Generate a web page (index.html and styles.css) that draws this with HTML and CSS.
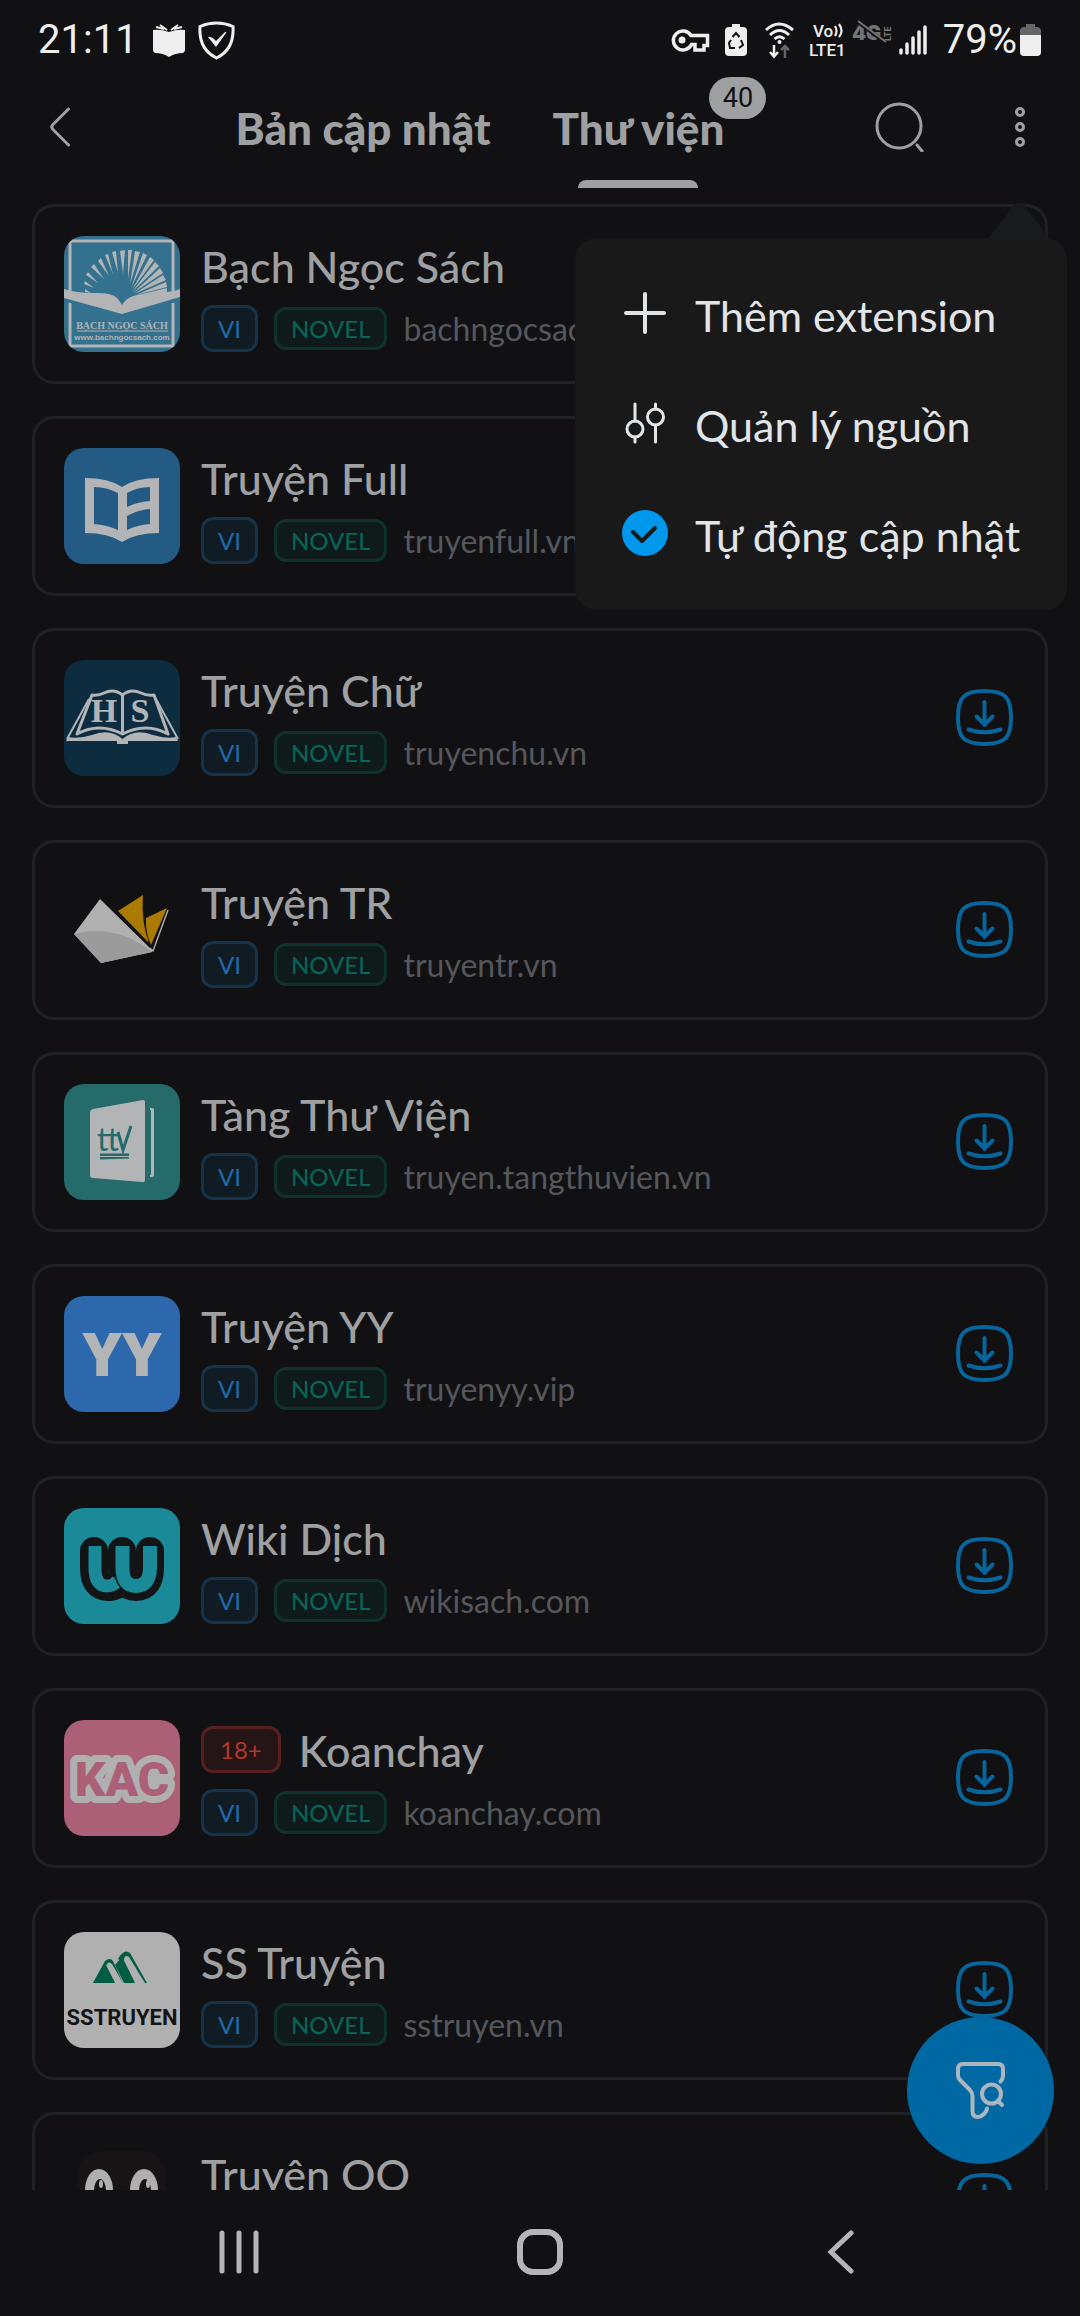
FILE: index.html
```html
<!DOCTYPE html>
<html lang="vi">
<head>
<meta charset="utf-8">
<meta name="viewport" content="width=device-width, initial-scale=1">
<title>Thư viện</title>
<link rel="stylesheet" href="styles.css">
</head>
<body>
<svg class="defs" aria-hidden="true">
  <symbol id="download" viewBox="0 0 63 63">
    <path d="M31.500 4C52 4 58 10 58 30.500S52 57 31.500 57 5 51 5 30.500 11 4 31.500 4Z M31.500 15V38 M23.500 29.500L31.500 37.500L39.500 29.500 M15.500 42.500Q31.500 48 47.500 42.500" fill="none" stroke="currentColor" stroke-width="4" stroke-linecap="round" stroke-linejoin="round"/>
  </symbol>
</svg>

<div class="screen">
  <div class="status">
    <div class="status-side">
      <span class="clock">21:11</span>
      <svg class="book-status" width="34" height="36" viewBox="0 0 34 36"><path d="M1 8Q9 7 17 10Q25 7 33 8V28Q33 30 31 31Q23 31 17 35Q11 31 3 31Q1 30 1 28Z" fill="#eee"/><path d="M15 8L8 3M12 7L4 5M19 8L26 3M22 7L30 5" stroke="#eee" stroke-width="2"/></svg>
      <svg width="37" height="39" viewBox="0 0 37 39"><path d="M18.500 2Q27 2 35 5.500C36 21 31 31 18.500 37C6 31 1 21 2 5.500Q10 2 18.500 2Z" fill="none" stroke="#eee" stroke-width="3"/><path d="M10 16Q13 15 18 20L27 11Q29 10 28 12L18 26Z" fill="#eee"/></svg>
    </div>
    <div class="status-side">
      <svg class="key" width="40" height="36" viewBox="0 0 40 36"><path d="M21 13.500H37.500V23.500H34V28H25V22.500H21.500A9.500 9.500 0 1 1 21 13.500Z" fill="none" stroke="#eee" stroke-width="3.500"/><circle cx="12" cy="18" r="3.500" fill="#eee"/></svg>
      <svg class="saver" width="22" height="34" viewBox="0 0 22 34"><path d="M7 1H15V4H18Q22 4 22 8V29Q22 33 18 33H4Q0 33 0 29V8Q0 4 4 4H7Z" fill="#eee"/><path d="M7.500 14L11 10L14.500 14M16 17L18 22L14 25M10 25H5L4 20L6 17" fill="none" stroke="#111113" stroke-width="2"/></svg>
      <svg class="wifi" width="29" height="38" viewBox="0 0 29 38"><g fill="none" stroke="#eee" stroke-width="3"><path d="M1 9Q14 -3 28 9M5 14Q14.500 5 24 14M9.500 18Q14.500 13.500 19.500 18"/><path d="M9 24V35M5 31L9 35.500L13 31" stroke-width="2.500"/><path d="M20 37V25M16 29L20 25L24 29" stroke="#666" stroke-width="2.500"/></g><circle cx="14.500" cy="21" r="2" fill="#eee"/></svg>
      <svg class="volte" width="42" height="42" viewBox="0 -4 42 42"><text x="4" y="14" class="net-text">Vo</text><text x="0" y="33" class="net-text">LTE1</text><path d="M26 3Q29 8 26 13M30 1Q35 8 30 14" fill="none" stroke="#eee" stroke-width="2.200"/></svg>
      <svg class="nog" width="42" height="42" viewBox="0 -4 42 42"><text x="1" y="17" class="g-text">4G</text><text transform="translate(40 18) rotate(-90)" class="side-text">LTE</text><path d="M7 -1L35 20" stroke="#111113" stroke-width="4"/><path d="M7 -2L35 19" stroke="#747474" stroke-width="2"/></svg>
      <svg class="bars" width="28" height="34" viewBox="0 0 28 34"><path d="M2 27V30M8 21V30M14 15V30M20 9V30M26 4V30" stroke="#eee" stroke-width="3.500" stroke-linecap="round"/></svg>
      <span class="clock">79%</span>
      <svg class="battery" width="22" height="34" viewBox="0 0 22 34"><path d="M6 1H15V4H18Q21 5 21 8V12H0V8Q0 5 3 4H6Z" fill="#666"/><path d="M0 12H21V29Q21 33 17 33H4Q0 33 0 29Z" fill="#eee"/></svg>
    </div>
  </div>

  <header class="bar">
    <button class="bar-button back" type="button" aria-label="Quay lại"><svg width="22" height="42" viewBox="0 0 22 42"><path d="M19.500 3L4 18.500Q1.500 21 4 23.500L19.500 39" fill="none" stroke="currentColor" stroke-width="3" stroke-linecap="round"/></svg></button>
    <nav class="tabs">
      <a class="tab" href="#updates">Bản cập nhật</a>
      <a class="tab active" href="#library" aria-current="page">Thư viện<span class="count">40</span></a>
    </nav>
    <button class="bar-button search" type="button" aria-label="Tìm kiếm"><svg width="50" height="50" viewBox="0 0 50 50"><circle cx="24" cy="24" r="22" fill="none" stroke="currentColor" stroke-width="3"/><path d="M42 43L47 49" stroke="currentColor" stroke-width="3" stroke-linecap="round"/></svg></button>
    <button class="bar-button more" type="button" aria-label="Thêm" aria-expanded="true"><svg width="12" height="42" viewBox="0 0 12 42"><g fill="none" stroke="currentColor" stroke-width="3"><circle cx="6" cy="6" r="3.500"/><circle cx="6" cy="21" r="3.500"/><circle cx="6" cy="36" r="3.500"/></g></svg></button>
    <div class="menu">
      <svg class="menu-tip" width="62" height="37" viewBox="0 0 62 37"><path d="M0 37L26 3Q31 -1 36 3L62 37Z" fill="#191a1b"/></svg>
      <button class="menu-item" type="button"><svg width="46" height="46" viewBox="0 0 46 46"><path d="M23 4V42M4 23H42" stroke="currentColor" stroke-width="4" stroke-linecap="round"/></svg><span class="menu-text">Thêm extension</span></button>
      <button class="menu-item" type="button"><svg width="46" height="46" viewBox="0 0 46 46"><g fill="none" stroke="currentColor" stroke-width="3" stroke-linecap="round"><circle cx="13" cy="29" r="8"/><circle cx="33.500" cy="17" r="8"/><path d="M13 4V21M13 37V42M33.500 4V9M33.500 25V42"/></g></svg><span class="menu-text">Quản lý nguồn</span></button>
      <label class="menu-item" for="auto"><span class="check"><input type="checkbox" id="auto" checked><svg width="46" height="46" viewBox="0 0 46 46"><path d="M11 22L20 31L33 18" fill="none" stroke="#191919" stroke-width="4" stroke-linecap="round" stroke-linejoin="round"/></svg></span><span class="menu-text">Tự động cập nhật</span></label>
    </div>
  </header>

  <main class="list">
    <article class="card">
      <svg class="logo" viewBox="0 0 116 116"><rect width="116" height="116" fill="#33718f"/><rect x="6" y="5" width="103" height="105" fill="none" stroke="#b2b4b5" stroke-width="3"/><path d="M-2 56H118V64L109 67H6L-2 64Z" fill="#33718f"/>
        <path fill="#b2b4b5" d="M21 53L21 56L27 57ZM21 45L20 48L30 52ZM24 36L22 39L34 47ZM30 28L27 31L40 43ZM37 22L34 25L45 40ZM44 18L41 19L49 38ZM52 15L48 16L54 37ZM61 14L56 15L59 38ZM68 14L64 14L64 43ZM76 16L71 15L66 48ZM83 19L79 17L67 52ZM90 24L86 21L68 54ZM95 30L91 26L68 56ZM99 37L96 32L69 57ZM102 44L99 39L70 58ZM103 51L102 46L72 59ZM103 57L103 52L74 59Z"/>
        <path fill="#b2b4b5" d="M0 53Q12 57 30 57C46 57 52 58 58 69C66 57 76 59 94 57Q108 56 116 53V61L58 78L0 62Z"/>
        <text class="serif-mark" x="58" y="93">BẠCH NGỌC SÁCH</text><path d="M13 95H104" stroke="#b2b4b5"/><text class="url-mark" x="58" y="104">www.bachngocsach.com</text></svg>
      <div class="info"><div class="title-row"><h2>Bạch Ngọc Sách</h2></div><div class="meta"><span class="badge lang">VI</span><span class="badge kind">NOVEL</span><span class="domain">bachngocsach.com</span></div></div>
      <button class="get" type="button" aria-label="Tải xuống"><svg><use href="#download"/></svg></button>
    </article>
    <article class="card">
      <svg class="logo" viewBox="0 0 116 116"><rect width="116" height="116" fill="#245b85"/><path fill="#b2b4b5" fill-rule="evenodd" d="M21 30Q45 30 58 39Q71 30 95 30V85Q72 85 58 94Q44 85 21 85ZM30 39V76Q43 77 54 82V45Q43 39 30 39ZM63 45V59Q73 54 86 53V39Q73 39 63 45ZM63 68V82Q73 77 86 76V61Q73 62 63 68Z"/></svg>
      <div class="info"><div class="title-row"><h2>Truyện Full</h2></div><div class="meta"><span class="badge lang">VI</span><span class="badge kind">NOVEL</span><span class="domain">truyenfull.vn</span></div></div>
      <button class="get" type="button" aria-label="Tải xuống"><svg><use href="#download"/></svg></button>
    </article>
    <article class="card">
      <svg class="logo" viewBox="0 0 116 116"><rect width="116" height="116" fill="#0d2c40"/><g fill="none" stroke="#b2b4b5" stroke-linejoin="round"><path stroke-width="3" d="M58.500 74V35Q50 28 40 33Q34 36 28 35L13 74Q35 62 58.500 74Q82 62 104 74L90 35Q83 36 77 33Q67 28 58.500 35"/><path stroke-width="2" d="M25 39L3 79M92 39L114 79"/></g><path fill="#b2b4b5" d="M4 77Q15 79 28 75Q46 68 58.500 79Q71 68 89 75Q102 79 112 77L114 81H64V84H53V81H2Z"/><text class="hs-mark" x="40" y="62">H</text><text class="hs-mark" x="76" y="62">S</text></svg>
      <div class="info"><div class="title-row"><h2>Truyện Chữ</h2></div><div class="meta"><span class="badge lang">VI</span><span class="badge kind">NOVEL</span><span class="domain">truyenchu.vn</span></div></div>
      <button class="get" type="button" aria-label="Tải xuống"><svg><use href="#download"/></svg></button>
    </article>
    <article class="card">
      <svg class="logo" viewBox="0 0 116 116"><path d="M36 27L88 78V80L37 91L10 62Z" fill="#b0b0b0"/><path d="M10 62C34 55 64 60 88 80L37 91Z" fill="#9b9b9b"/><path d="M54 39L79 23Q77 50 85 71ZM82 46L103 36L87 73Q81 60 82 46Z" fill="#ab7a00"/><path d="M104 38L89 79L86 76" fill="none" stroke="#aaa" stroke-width="1.500"/></svg>
      <div class="info"><div class="title-row"><h2>Truyện TR</h2></div><div class="meta"><span class="badge lang">VI</span><span class="badge kind">NOVEL</span><span class="domain">truyentr.vn</span></div></div>
      <button class="get" type="button" aria-label="Tải xuống"><svg><use href="#download"/></svg></button>
    </article>
    <article class="card">
      <svg class="logo" viewBox="0 0 116 116"><rect width="116" height="116" fill="#256b6b"/><path d="M29 25L79 16Q81 16 81 18V96Q81 99 78 98L29 94Q26 94 26 91V28Q26 26 29 25ZM86 24H88Q90 24 90 26V91Q90 93 88 93H86V91H87V26H86Z" fill="#b2b4b5"/><text class="ttv-mark" x="33" y="67">tt</text><path d="M54 48L59 66L67 42M36 71H65M36 74L65 73" fill="none" stroke="#256b6b" stroke-width="3"/><path d="M36 72.500H65" stroke="#b2b4b5"/></svg>
      <div class="info"><div class="title-row"><h2>Tàng Thư Viện</h2></div><div class="meta"><span class="badge lang">VI</span><span class="badge kind">NOVEL</span><span class="domain">truyen.tangthuvien.vn</span></div></div>
      <button class="get" type="button" aria-label="Tải xuống"><svg><use href="#download"/></svg></button>
    </article>
    <article class="card">
      <svg class="logo" viewBox="0 0 116 116"><rect width="116" height="116" fill="#2e68ac"/><text class="yy-mark" x="58" y="80">YY</text></svg>
      <div class="info"><div class="title-row"><h2>Truyện YY</h2></div><div class="meta"><span class="badge lang">VI</span><span class="badge kind">NOVEL</span><span class="domain">truyenyy.vip</span></div></div>
      <button class="get" type="button" aria-label="Tải xuống"><svg><use href="#download"/></svg></button>
    </article>
    <article class="card">
      <svg class="logo" viewBox="0 0 116 116"><rect width="116" height="116" fill="#1a8998"/><g fill="none" stroke-linejoin="round"><g stroke="#131416" stroke-width="28" stroke-linecap="round"><path d="M30 43V60Q30 79 44 79Q52 79 57 72"/><path d="M58 43V60Q58 79 72 79T86 60V43"/></g><path d="M31 38V60Q31 78 43 78Q50 78 54 72" stroke="#1a8998" stroke-width="13"/><path d="M58.500 38V60Q58.500 78 72 78T86 60V38" stroke="#131416" stroke-width="17"/><path d="M58.500 38V60Q58.500 78 72 78T86 60V38" stroke="#1a8998" stroke-width="14"/></g></svg>
      <div class="info"><div class="title-row"><h2>Wiki Dịch</h2></div><div class="meta"><span class="badge lang">VI</span><span class="badge kind">NOVEL</span><span class="domain">wikisach.com</span></div></div>
      <button class="get" type="button" aria-label="Tải xuống"><svg><use href="#download"/></svg></button>
    </article>
    <article class="card">
      <svg class="logo" viewBox="0 0 116 116"><rect width="116" height="116" fill="#ab6078"/><text class="kac-mark" x="58" y="76">KAC</text></svg>
      <div class="info"><div class="title-row"><span class="badge adult">18+</span><h2>Koanchay</h2></div><div class="meta"><span class="badge lang">VI</span><span class="badge kind">NOVEL</span><span class="domain">koanchay.com</span></div></div>
      <button class="get" type="button" aria-label="Tải xuống"><svg><use href="#download"/></svg></button>
    </article>
    <article class="card">
      <svg class="logo" viewBox="0 0 116 116"><rect width="116" height="116" fill="#b0b0b0"/><path d="M29 51L41 29Q46 25 49 29L59 51H71L58 29L54 27Q60 16 66 21L83 51H81L65 25Q60 22 60 29L71 51H59L48 32Q44 28 42 34L51 51Z" fill="#005c43"/><path d="M29 51L41 31L51 51ZM60 51L51 33L58 25L71 51Z" fill="#005c43"/><text class="ss-mark" x="58" y="93">SSTRUYEN</text></svg>
      <div class="info"><div class="title-row"><h2>SS Truyện</h2></div><div class="meta"><span class="badge lang">VI</span><span class="badge kind">NOVEL</span><span class="domain">sstruyen.vn</span></div></div>
      <button class="get" type="button" aria-label="Tải xuống"><svg><use href="#download"/></svg></button>
    </article>
    <article class="card">
      <svg class="logo" viewBox="0 0 116 116"><path d="M13 60V34Q15 7 40 7H76Q100 7 102 34V60Q102 100 58 104Q14 100 13 60Z" fill="#181415"/><ellipse cx="35" cy="46" rx="14" ry="21" fill="#b0b0b0"/><ellipse cx="80" cy="46" rx="14" ry="21" fill="#b0b0b0"/><ellipse cx="36" cy="47" rx="6" ry="12" fill="#181415"/><ellipse cx="81" cy="47" rx="6" ry="12" fill="#181415"/><ellipse cx="37" cy="40" rx="2" ry="4" fill="#b0b0b0"/><ellipse cx="84" cy="40" rx="2" ry="4" fill="#b0b0b0"/></svg>
      <div class="info"><div class="title-row"><h2>Truyện OO</h2></div><div class="meta"><span class="badge lang">VI</span><span class="badge kind">NOVEL</span><span class="domain">truyenoo.com</span></div></div>
      <button class="get" type="button" aria-label="Tải xuống"><svg><use href="#download"/></svg></button>
    </article>
  </main>

  <button class="fab" type="button" aria-label="Lọc nguồn"><svg viewBox="0 0 147 147"><g fill="none" stroke="#adb6bc" stroke-width="4" stroke-linecap="round" stroke-linejoin="round"><path d="M93.500 64.500Q96 62 96 59V52Q96 47 91 47H56Q51 47 51 52V58Q51 61 53 63L63 73Q65.500 76 65.500 79V94Q65.500 100 71 100Q74 100 77 97Q80 94 80 91.500"/><circle cx="84.500" cy="77" r="9.500"/><path d="M91 84L95 88"/></g></svg></button>

  <nav class="system" aria-label="Điều hướng">
    <button type="button" aria-label="Gần đây"><svg width="46" height="46" viewBox="0 0 46 46"><path d="M6 3V41M23 3V41M40 3V41" stroke="#b5b5b5" stroke-width="5" stroke-linecap="round"/></svg></button>
    <button type="button" aria-label="Trang chủ"><svg width="48" height="48" viewBox="0 0 48 48"><rect x="4" y="3" width="40" height="40" rx="13" fill="none" stroke="#b5b5b5" stroke-width="6"/></svg></button>
    <button type="button" aria-label="Trở về"><svg width="46" height="46" viewBox="0 0 46 46"><path d="M33 3L13 22L33 41" fill="none" stroke="#b5b5b5" stroke-width="5" stroke-linecap="round"/></svg></button>
  </nav>
</div>
</body>
</html>
```
FILE: styles.css
```css
* { box-sizing: border-box; }

body {
  margin: 0;
  background: #111113;
  color: #9fa0a2;
  font-family: Lato, "Noto Sans", sans-serif;
}

button {
  padding: 0;
  border: 0;
  background: none;
  color: inherit;
  font: inherit;
}

svg { display: block; flex: none; }
.defs { display: none; }

.screen {
  position: relative;
  display: flex;
  flex-direction: column;
  height: 100vh;
  overflow: hidden;
}

/* Status bar */
.status {
  flex: none;
  display: flex;
  justify-content: space-between;
  height: 66px;
  padding: 14px 38px 0 38px;
}
.status-side { display: flex; align-items: center; }
.clock {
  color: #eee;
  font: 400 40px/48px Roboto, sans-serif;
}
.book-status { margin: 0 12px 0 14px; }
.saver { margin: 0 18px 0 15px; }
.volte { margin: 0 0 0 15px; }
.nog { margin-right: 6px; }
.bars { margin-right: 16px; }
.battery { margin-left: 3px; }
.net-text { fill: #eee; font: 500 17px Roboto, sans-serif; }
.g-text { fill: #747474; font: 900 20px Inter, sans-serif; }
.side-text { fill: #747474; font: 700 9px Roboto, sans-serif; }

/* Header */
.bar {
  position: relative;
  z-index: 2;
  flex: none;
  display: flex;
  height: 122px;
}
.bar-button {
  display: flex;
  align-items: center;
  justify-content: center;
  width: 120px;
}
.tabs {
  flex: 1;
  display: flex;
  justify-content: center;
  gap: 62px;
}
.tab {
  position: relative;
  color: inherit;
  font-size: 44px;
  font-weight: 900;
  line-height: 124px;
  text-decoration: none;
  white-space: nowrap;
}
.tab.active::after {
  content: "";
  position: absolute;
  bottom: 0;
  left: calc(50% - 60px);
  width: 120px;
  height: 8px;
  border-radius: 8px 8px 0 0;
  background: #9fa0a2;
}
.count {
  position: absolute;
  top: 11px;
  right: -42px;
  width: 57px;
  border-radius: 21px;
  background: #9fa0a2;
  color: #111113;
  font: 400 27px/42px Roboto, sans-serif;
  text-align: center;
}

/* Dropdown menu */
.menu {
  position: absolute;
  top: 172px;
  right: 13px;
  width: 492px;
  padding: 21px 0;
  border-radius: 22px;
  background: #191919;
  color: #e2e5e8;
}
.menu-tip {
  position: absolute;
  top: -36px;
  right: 17px;
}
.menu-item {
  display: flex;
  align-items: center;
  gap: 27px;
  width: 100%;
  height: 110px;
  padding: 0 0 2px 47px;
  font-size: 43px;
  line-height: 52px;
  white-space: nowrap;
}
.menu-text { padding-top: 6px; }
.check { display: grid; }
.check > * { grid-area: 1 / 1; }
.check input {
  width: 46px;
  height: 46px;
  margin: 0;
  border-radius: 50%;
  appearance: none;
  background: #0098ec;
}
.check svg { z-index: 1; }

/* Source list */
.list {
  flex: 1;
  display: flex;
  flex-direction: column;
  gap: 32px;
  min-height: 0;
  padding: 16px 32px 0;
  overflow: hidden;
}
.card {
  flex: none;
  display: flex;
  align-items: center;
  gap: 21px;
  padding: 29px;
  border: 3px solid #1e2224;
  border-radius: 22px;
}
.logo {
  width: 116px;
  height: 116px;
  border-radius: 20px;
}
.info {
  flex: 1;
  display: flex;
  flex-direction: column;
  gap: 11px;
  min-width: 0;
}
.title-row {
  display: flex;
  align-items: center;
  gap: 18px;
  height: 58px;
}
h2 {
  margin: 0;
  padding-top: 3px;
  font-size: 43px;
  font-weight: 500;
  line-height: 58px;
}
.meta {
  display: flex;
  align-items: center;
  gap: 16px;
}
.badge {
  padding: 0 14px;
  border: 3px solid;
  border-radius: 12px;
  font-size: 24px;
  line-height: 41px;
}
.lang { border-color: #17324b; background: #111b24; color: #1d6bab; }
.kind { border-color: #0f322d; background: #0f1a1a; color: #05685c; line-height: 37px; }
.adult { padding: 0 16px; border-color: #57201e; background: #251516; color: #b0382e; }
.domain {
  color: #55575b;
  font-size: 32px;
  line-height: 47px;
}
.get { color: #07659b; }
.get svg { width: 63px; height: 63px; }

/* Lettering inside the source logos */
.logo text { text-anchor: middle; fill: #b2b4b5; }
.logo .serif-mark { font: 700 10px "Liberation Serif", serif; }
.logo .url-mark { font: 700 8px "Liberation Sans", sans-serif; }
.logo .hs-mark { font: 700 34px "Liberation Serif", serif; }
.logo .ttv-mark { text-anchor: start; fill: #256b6b; font: 400 32px Lato, sans-serif; }
.logo .yy-mark { font: 800 60px "Open Sans", sans-serif; }
.logo .kac-mark {
  fill: #ab6078;
  stroke: #b0b0b0;
  stroke-width: 14px;
  stroke-linejoin: round;
  paint-order: stroke;
  font: 900 48px Roboto, sans-serif;
}
.logo .ss-mark { fill: #131416; font: 700 22px Roboto, sans-serif; }

/* Floating filter button */
.fab {
  position: absolute;
  z-index: 1;
  right: 26px;
  bottom: 152px;
  width: 147px;
  height: 147px;
  border-radius: 50%;
  background: #0068a3;
}

/* System navigation */
.system {
  flex: none;
  display: flex;
  justify-content: center;
  gap: 53px;
  height: 126px;
}
.system button {
  display: flex;
  align-items: center;
  justify-content: center;
  width: 23%;
}
```
